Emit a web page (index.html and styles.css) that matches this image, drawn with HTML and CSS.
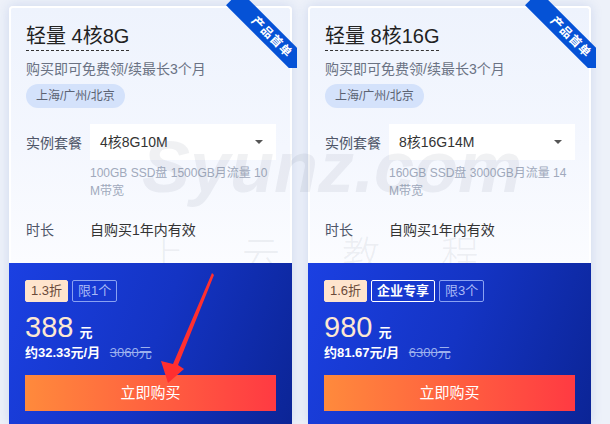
FILE: index.html
```html
<!DOCTYPE html>
<html lang="zh">
<head>
  <meta charset="UTF-8" />
  <title>轻量应用服务器</title>
  <link rel="stylesheet" href="styles.css">
</head>
<body>
  <div class="page">

    <div class="card">
      <div class="ribbon"><span>产品首单</span></div>
      <div class="card-top">
        <h2 class="title">轻量 4核8G</h2>
        <p class="sub">购买即可免费领/续最长3个月</p>
        <span class="region">上海/广州/北京</span>
        <div class="row">
          <span class="label">实例套餐</span>
          <div class="select">4核8G10M<i class="caret"></i></div>
        </div>
        <p class="spec">100GB SSD盘 1500GB月流量 10M带宽</p>
        <div class="row">
          <span class="label">时长</span>
          <span class="value">自购买1年内有效</span>
        </div>
      </div>
      <div class="card-bottom">
        <div class="tags">
          <span class="tag off">1.3折</span>
          <span class="tag limit">限1个</span>
        </div>
        <div class="price"><b>388</b><em>元</em></div>
        <div class="month">约32.33元/月 <s>3060元</s></div>
        <a href="#" class="buy">立即购买</a>
      </div>
    </div>

    <div class="card">
      <div class="ribbon"><span>产品首单</span></div>
      <div class="card-top">
        <h2 class="title">轻量 8核16G</h2>
        <p class="sub">购买即可免费领/续最长3个月</p>
        <span class="region">上海/广州/北京</span>
        <div class="row">
          <span class="label">实例套餐</span>
          <div class="select">8核16G14M<i class="caret"></i></div>
        </div>
        <p class="spec">160GB SSD盘 3000GB月流量 14M带宽</p>
        <div class="row">
          <span class="label">时长</span>
          <span class="value">自购买1年内有效</span>
        </div>
      </div>
      <div class="card-bottom">
        <div class="tags">
          <span class="tag off">1.6折</span>
          <span class="tag vip">企业专享</span>
          <span class="tag limit">限3个</span>
        </div>
        <div class="price"><b>980</b><em>元</em></div>
        <div class="month">约81.67元/月 <s>6300元</s></div>
        <a href="#" class="buy">立即购买</a>
      </div>
    </div>

    <!-- watermark -->
    <div class="wm">
      <span class="wm-logo">Syunz.com</span>
      <span class="wm-c c1">上</span>
      <span class="wm-c c2">云</span>
      <span class="wm-c c3">教</span>
      <span class="wm-c c4">程</span>
    </div>

    <!-- red arrow -->
    <svg class="arrow" width="610" height="424" viewBox="0 0 610 424">
      <polygon points="212,273 214,275 178,365 184,369 168,383 161,361 173,364" fill="#ff2f2f"/>
    </svg>
  </div>
</body>
</html>
```

FILE: styles.css
```css
* { box-sizing: border-box; }

body {
  margin: 0;
  background-color: #edf1f9;
  font-family: "Liberation Sans", "Noto Sans CJK SC", sans-serif;
  color: #333;
  overflow: hidden;
}

.page {
  position: relative;
  display: flex;
  gap: 16px;
  padding: 6px 9px 0;
  height: 424px;
}

.card {
  position: relative;
  width: 283px;
  flex-shrink: 0;
  border-radius: 4px;
  box-shadow: 0 0 12px rgba(60, 100, 190, 0.18);
}

.card-top {
  border: 2px solid #fff;
  border-bottom: 0;
  border-radius: 4px 4px 0 0;
  padding: 14px 14px 16px 15px;
  background: linear-gradient(180deg, #eef3fd 0%, #f4f7fe 55%, #fbfcff 100%);
}

.title {
  display: inline-block;
  margin: 0;
  font-size: 20px;
  font-weight: normal;
  line-height: 28px;
  color: #222;
  border-bottom: 1px dashed #333;
}

.sub {
  margin: 8px 0 0;
  font-size: 14px;
  line-height: 20px;
  color: #6a7283;
}

.region {
  display: inline-block;
  margin-top: 5px;
  height: 24px;
  line-height: 24px;
  padding: 0 10px;
  border-radius: 12px;
  background-color: #d4e2fb;
  font-size: 12px;
  color: #5b6272;
}

.row {
  display: flex;
  align-items: center;
  height: 36px;
  margin-top: 16px;
}

.label {
  width: 64px;
  flex-shrink: 0;
  font-size: 14px;
  color: #4f5668;
}

.select {
  position: relative;
  flex: 1;
  height: 36px;
  line-height: 36px;
  padding-left: 10px;
  background-color: #fff;
  font-size: 14px;
  color: #333;
}

.caret {
  position: absolute;
  right: 13px;
  top: 16px;
  border-left: 4px solid transparent;
  border-right: 4px solid transparent;
  border-top: 4px solid #555;
}

.spec {
  margin: 4px 0 0 64px;
  font-size: 12px;
  line-height: 18px;
  color: #a0a9bc;
  word-break: break-all;
}

.spec + .row {
  margin-top: 11px;
}

.value {
  font-size: 14px;
  color: #333;
}

.card-bottom {
  position: relative;
  z-index: 2;
  padding: 17px 16px 30px;
  background: linear-gradient(110deg, #1b40e2 0%, #1434c4 50%, #0b2494 100%);
}

.tags {
  display: flex;
  gap: 4px;
}

.tag {
  height: 22px;
  line-height: 20px;
  padding: 0 5px;
  font-size: 13px;
  border: 1px solid transparent;
  border-radius: 2px;
}

.tag.off {
  background-color: #ffe4cd;
  border-color: #ffe4cd;
  color: #6b4a3a;
}

.tag.limit {
  border-color: #8aa2f2;
  color: #aab9f6;
}

.tag.vip {
  border-color: #fff;
  color: #fff;
  font-weight: bold;
}

.price {
  display: flex;
  align-items: baseline;
  gap: 6px;
  height: 32px;
  margin-top: 9px;
  color: #fde8d2;
}

.price b {
  font-size: 29px;
  line-height: 32px;
  font-weight: normal;
}

.price em {
  font-style: normal;
  font-size: 13px;
  font-weight: bold;
  color: #fff;
}

.month {
  margin-top: 1px;
  font-size: 13px;
  line-height: 18px;
  font-weight: bold;
  color: #fff;
}

.month s {
  margin-left: 6px;
  font-weight: normal;
  color: #9cb0ee;
}

.buy {
  display: block;
  margin-top: 13px;
  height: 36px;
  line-height: 36px;
  text-align: center;
  text-decoration: none;
  font-size: 15px;
  color: #fff;
  background: linear-gradient(90deg, #ff8a3c 0%, #ff5a40 60%, #ff3a42 100%);
}

/* corner ribbon */
.ribbon {
  position: absolute;
  top: -6px;
  right: -5px;
  width: 78px;
  height: 68px;
  overflow: hidden;
  z-index: 3;
}

.ribbon span {
  position: absolute;
  left: -2px;
  top: 27px;
  width: 110px;
  height: 20px;
  line-height: 20px;
  text-align: center;
  font-size: 12px;
  font-weight: bold;
  letter-spacing: 1px;
  color: #fff;
  background-color: #0552d6;
  transform: rotate(45deg);
}

/* watermark */
.wm {
  position: absolute;
  left: 0;
  top: 0;
  width: 610px;
  height: 424px;
  z-index: 1;
  pointer-events: none;
  color: rgba(110, 115, 135, 0.1);
}

.wm-logo {
  position: absolute;
  left: 142px;
  top: 126px;
  font-size: 72px;
  font-weight: bold;
  font-style: italic;
}

.wm-c {
  position: absolute;
  top: 224px;
  font-size: 38px;
  font-family: "Noto Sans CJK SC", sans-serif;
  font-weight: 300;
}

.c1 { left: 146px; }
.c2 { left: 242px; }
.c3 { left: 342px; }
.c4 { left: 441px; }

.arrow {
  position: absolute;
  left: 0;
  top: 0;
  z-index: 4;
  pointer-events: none;
}
```
